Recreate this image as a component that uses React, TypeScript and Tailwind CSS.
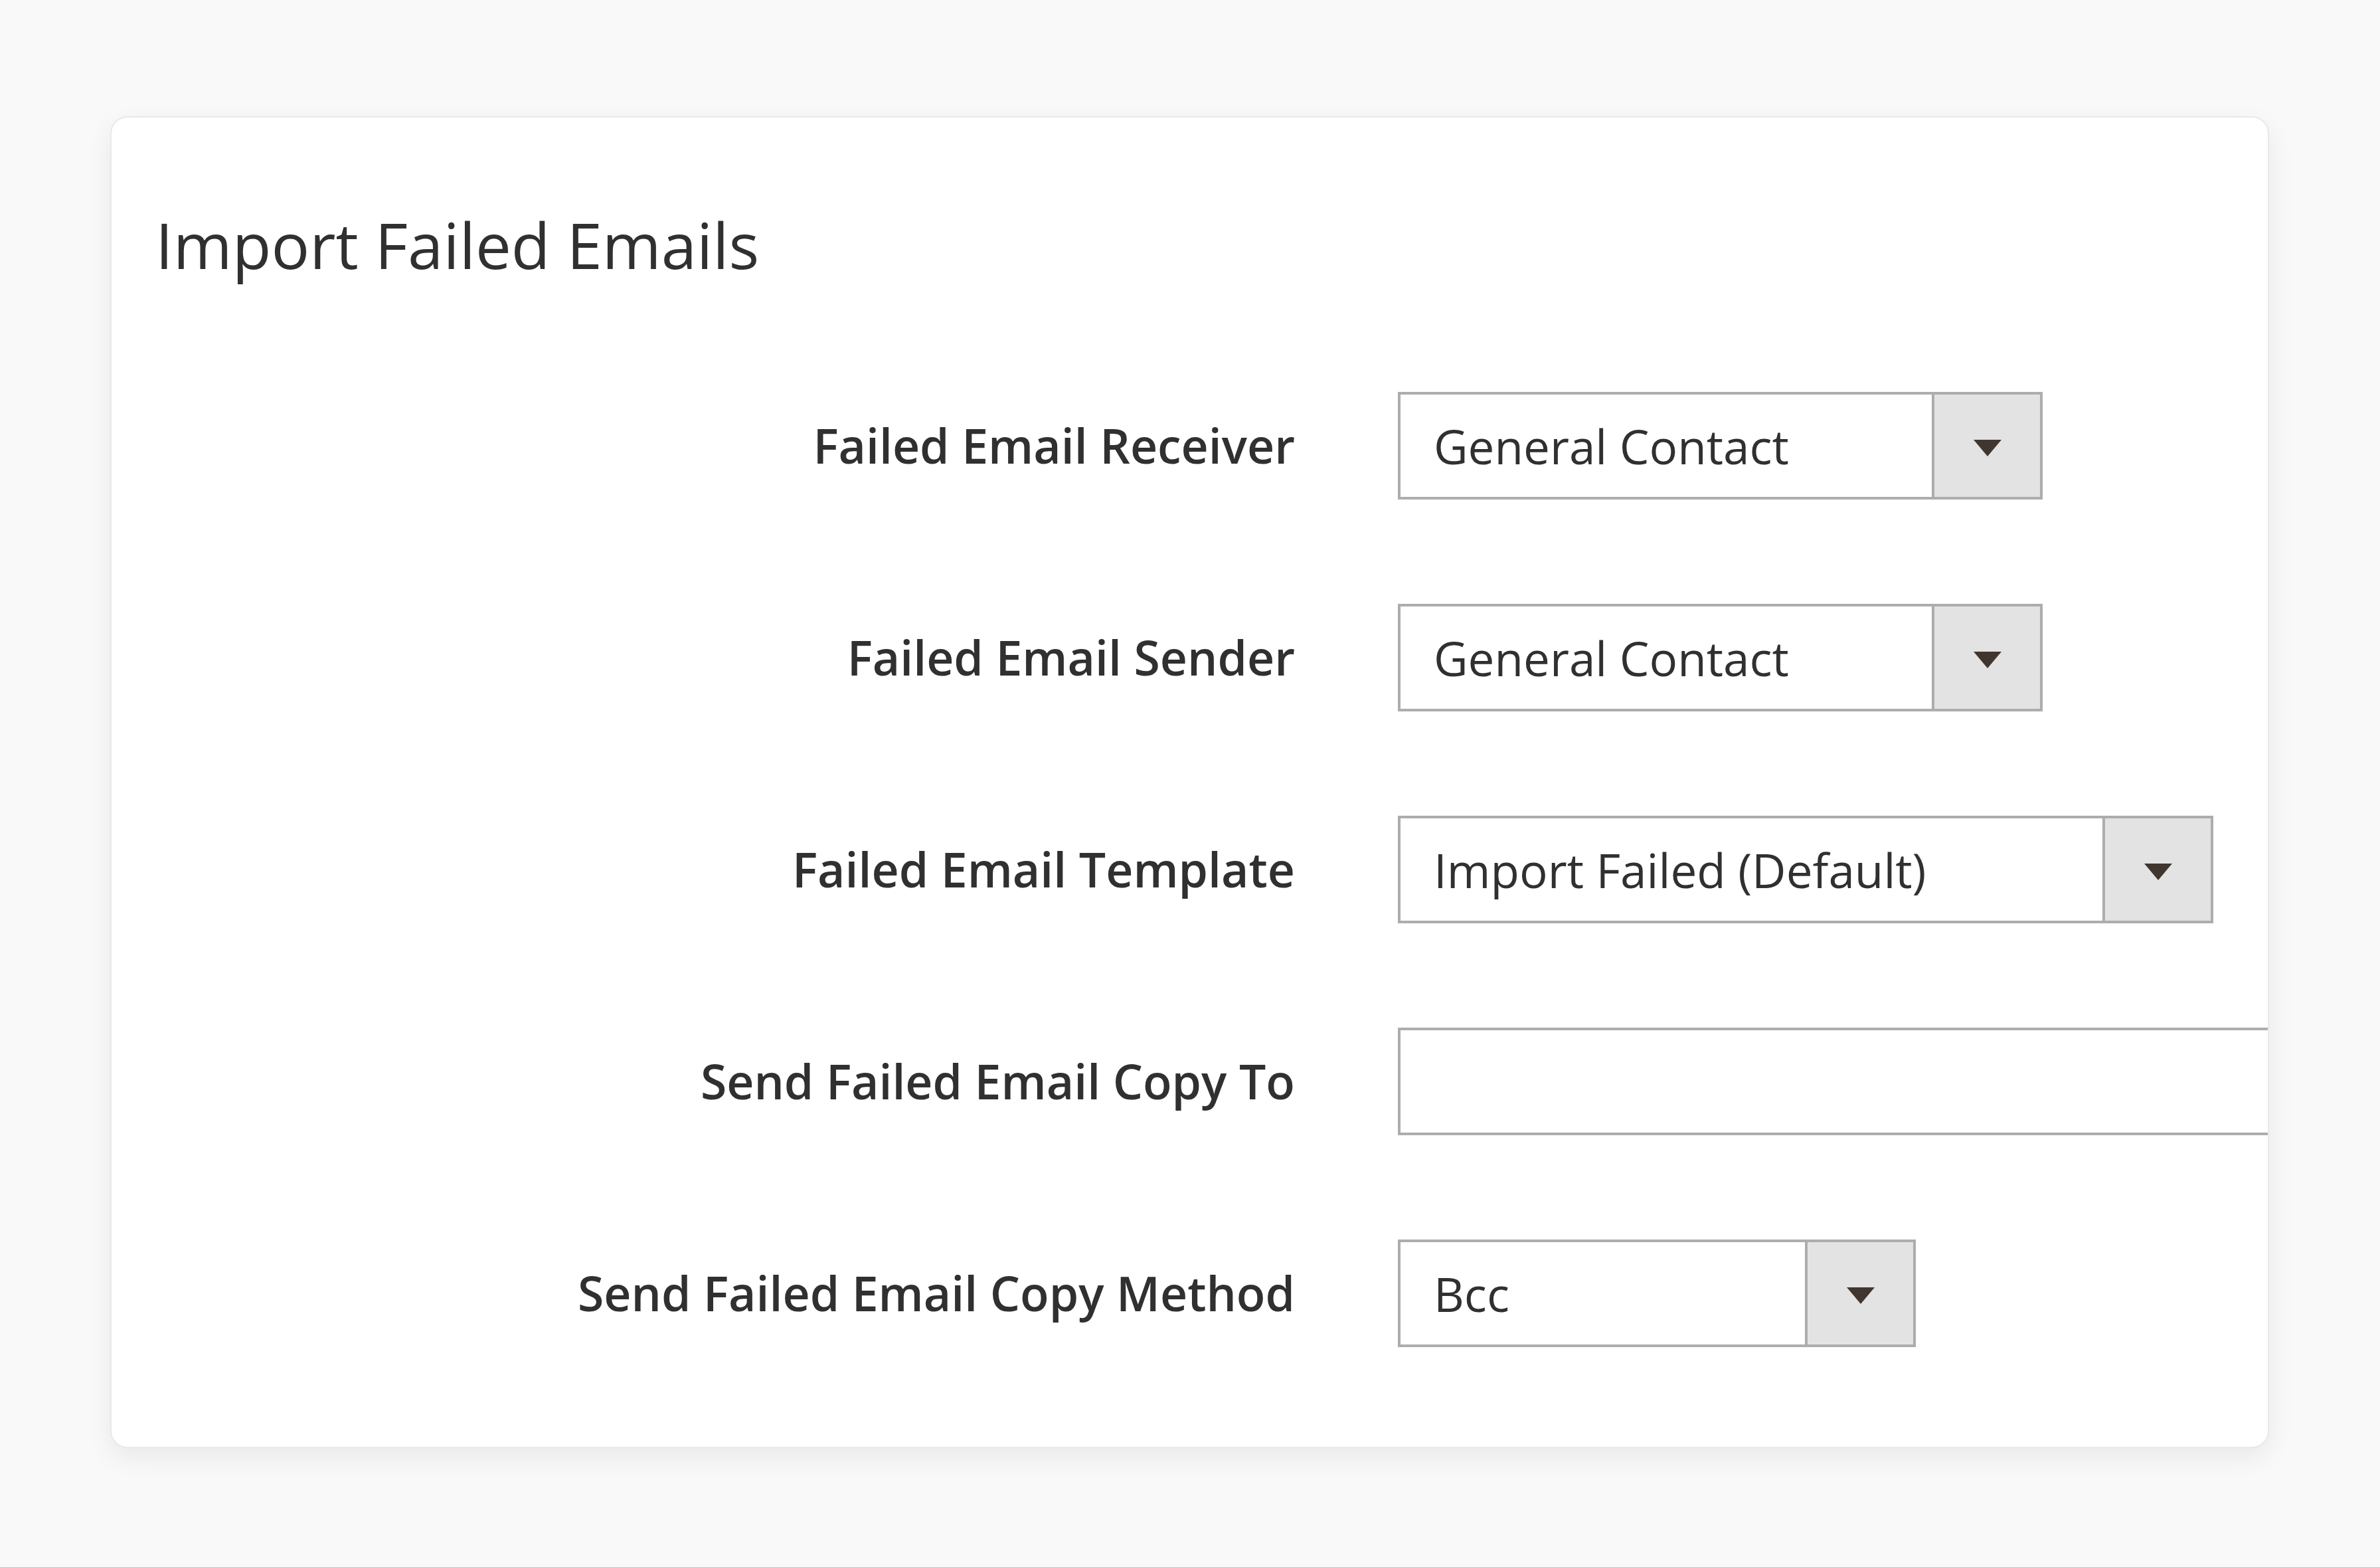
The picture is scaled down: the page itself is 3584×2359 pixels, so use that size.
import React from 'react'

const font = { fontFamily: '"Open Sans", "Noto Sans", Arial, sans-serif' }

function Arrow() {
  return (
    <svg width="42" height="25" viewBox="0 0 42 25" className="mt-[6px]">
      <polygon points="0,0 42,0 21,25" fill="#41362f" />
    </svg>
  )
}

function Select({ value, width }: { value: string; width: string }) {
  return (
    <div className={`flex h-[162px] shrink-0 border-[4px] border-[#adadad] bg-white ${width}`}>
      <div className="flex flex-1 items-center pl-[50px] text-[71px] leading-none text-[#303030]">{value}</div>
      <div className="flex w-[163px] items-center justify-center border-l-[4px] border-[#adadad] bg-[#e3e3e3]">
        <Arrow />
      </div>
    </div>
  )
}

function Row({ label, children }: { label: string; children: React.ReactNode }) {
  return (
    <div className="flex h-[162px] items-center">
      <div className="w-[1782px] shrink-0 text-right text-[71.5px] font-semibold leading-none text-[#303030]">
        {label}
      </div>
      <div className="ml-[155px] flex">{children}</div>
    </div>
  )
}

export default function App() {
  return (
    <div className="h-[2359px] w-[3584px] overflow-hidden bg-[#f9f9f9] pt-[175px] pl-[166px]" style={font}>
      <div className="w-[3251px] overflow-hidden rounded-[26px] border-2 border-[#e9e9e9] bg-white pt-[134px] pb-[150px] shadow-[0_14px_40px_rgba(0,0,0,0.07)]">
        <h1 className="pl-[66px] text-[96px] font-normal leading-[113px] text-[#303030]">Import Failed Emails</h1>
        <div className="mt-[166px] flex flex-col gap-[157px]">
          <Row label="Failed Email Receiver">
            <Select value="General Contact" width="w-[971px]" />
          </Row>
          <Row label="Failed Email Sender">
            <Select value="General Contact" width="w-[971px]" />
          </Row>
          <Row label="Failed Email Template">
            <Select value="Import Failed (Default)" width="w-[1228px]" />
          </Row>
          <Row label="Send Failed Email Copy To">
            <div className="h-[162px] w-[1500px] shrink-0 border-[4px] border-[#adadad] bg-white" />
          </Row>
          <Row label="Send Failed Email Copy Method">
            <Select value="Bcc" width="w-[780px]" />
          </Row>
        </div>
      </div>
    </div>
  )
}
